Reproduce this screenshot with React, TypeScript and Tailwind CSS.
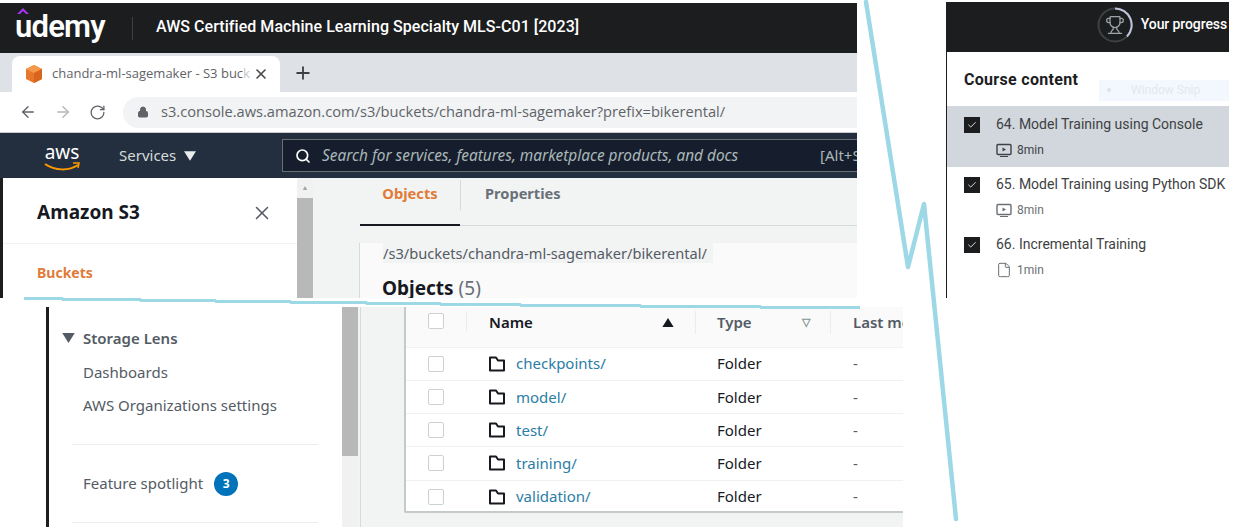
import React from "react";
import { ArrowLeft, ArrowRight, RotateCw, Lock, Plus, X, Search, Trophy, Check, File } from "lucide-react";

const Tick = () => (
  <div className="flex h-4 w-4 shrink-0 items-center justify-center bg-[#1c1d1f]">
    <Check className="h-2.5 w-2.5 text-white" strokeWidth={2} />
  </div>
);

const Tri = ({ className, up }: { className: string; up?: boolean }) => (
  <svg viewBox="0 0 10 8" className={className}>
    <path d={up ? "M0 8h10L5 0z" : "M0 0h10L5 8z"} fill="currentColor" />
  </svg>
);

const PlayIcon = () => (
  <svg viewBox="0 0 16 16" className="h-4 w-4 shrink-0" fill="none">
    <rect x="1" y="2.5" width="14" height="10" rx="1" stroke="currentColor" strokeWidth="1.4" />
    <path d="M6.5 5.5v4l3.5-2z" fill="currentColor" />
    <path d="M4 14.5h8" stroke="currentColor" strokeWidth="1" />
  </svg>
);

const FolderIcon = () => (
  <svg viewBox="0 0 16 16" className="h-4 w-4 shrink-0" fill="none">
    <path d="M1 14.5V1.5h6l2 3h6v10z" stroke="#16191f" strokeWidth="2" strokeLinejoin="round" />
  </svg>
);

const Cube = () => (
  <svg viewBox="0 0 20 20" className="h-5 w-5 shrink-0">
    <path d="M10 1l8 4v10l-8 4-8-4V5z" fill="#e8772e" />
    <path d="M10 1l8 4-8 4-8-4z" fill="#f59a4c" />
    <path d="M10 9l8-4v10l-8 4z" fill="#d9651c" />
  </svg>
);

const Course = ({ title, time, doc, active }: { title: string; time: string; doc?: boolean; active?: boolean }) => (
  <div className={`flex h-[60px] pl-[17px] pt-[10px] ${active ? "bg-[#d1d7dc]" : "bg-white"}`}>
    <Tick />
    <div className="ml-4 min-w-0">
      <div className="-mt-px whitespace-nowrap text-[14px] leading-[16px] text-[#3e4143]">{title}</div>
      <div className={`mt-[10px] flex items-center gap-[5px] text-[12px] leading-4 ${active ? "text-[#3e4143]" : "text-[#6a6f73]"}`}>
        {doc ? <File className="h-4 w-4" strokeWidth={1.5} /> : <PlayIcon />}
        <span>{time}</span>
      </div>
    </div>
  </div>
);

const rows = ["checkpoints/", "model/", "test/", "training/", "validation/"];

const Box = () => <div className="h-4 w-4 rounded-[2px] border border-[#ccd1d3] bg-white" />;

export default function App() {
  return (
    <div className="relative h-[529px] w-[1236px] overflow-hidden bg-white font-['Noto_Sans',sans-serif]">
      <div className="flex items-start">
        {/* left capture */}
        <div className="mt-[3px] flex h-[295px] w-[857px] flex-col overflow-hidden">
          <div className="flex h-[50px] shrink-0 items-center bg-[#1c1d1f] pl-[15px] font-['Roboto',sans-serif] text-white">
            <div className="relative w-[93px] pb-[3px]">
              <svg viewBox="0 0 14 7" className="absolute left-[1px] top-[0px] h-[6px] w-[14px]">
                <path d="M0 7l7-7 7 7h-3.5L7 3.5 3.5 7z" fill="#a435f0" />
              </svg>
              <span className="block text-[31px] font-semibold leading-[38px] tracking-[-0.8px]">udemy</span>
            </div>
            <div className="ml-[24px] h-[23px] w-px bg-[#3e4143]" />
            <div className="ml-[23px] pb-[2px] whitespace-nowrap text-[16px] font-medium tracking-[0.05px]">AWS Certified Machine Learning Specialty MLS-C01 [2023]</div>
          </div>

          <div className="flex h-[39px] shrink-0 items-end bg-[#dee1e6] pl-[12px]">
            <div className="flex h-[36px] w-[268px] items-center rounded-t-lg bg-white pl-[12px] font-['Open_Sans',sans-serif]">
              <Cube />
              <span className="ml-2 w-[193px] whitespace-nowrap text-[13px] text-[#5f6368]">chandra-ml-sagemaker - S3 buc<span className="text-[#c4c7ca]">k</span></span>
              <X className="ml-[8px] h-4 w-4 text-[#444746]" strokeWidth={2.4} />
            </div>
            <Plus className="mb-[9px] ml-[13px] h-[20px] w-[20px] text-[#3c4043]" strokeWidth={2.2} />
          </div>

          <div className="flex h-[41px] shrink-0 items-center border-b border-[#c6cbd0] bg-white pl-[19px]">
            <ArrowLeft className="h-[18px] w-[18px] text-[#5f6368]" strokeWidth={1.8} />
            <ArrowRight className="ml-[17px] h-[18px] w-[18px] text-[#b4b7bb]" strokeWidth={1.8} />
            <RotateCw className="ml-[17px] h-[17px] w-[17px] text-[#5f6368]" strokeWidth={1.8} />
            <div className="ml-[17px] flex h-[31px] flex-1 items-center rounded-l-full bg-[#f1f3f4] pl-[14px] font-['Open_Sans',sans-serif] text-[14.65px] text-[#5f6368]">
              <Lock className="h-3 w-3 fill-[#5f6368] text-[#5f6368]" />
              <span className="ml-[12px] whitespace-nowrap">s3.console.aws.amazon.com/s3/buckets/chandra-ml-sagemaker?prefix=bikerental/</span>
            </div>
          </div>

          <div className="flex h-[45px] shrink-0 items-center bg-[#232f3e] pl-[44px] text-[#d5dbdb]">
            <div className="relative w-[36px] shrink-0 text-center text-[19px] leading-[18px] text-white">
              <span className="relative top-[-4px]">aws</span>
              <svg viewBox="0 0 36 10" className="absolute left-0 top-[15px] h-[10px] w-[36px]" fill="none">
                <path d="M1 2c10 7 24 7 33 1" stroke="#f90" strokeWidth="2" />
                <path d="M29 1h6l-1 5" stroke="#f90" strokeWidth="1.5" />
              </svg>
            </div>
            <span className="ml-[39px] w-[58px] shrink-0 text-[15px]">Services</span>
            <Tri className="ml-[7px] h-[10px] w-[12px] shrink-0 text-[#e8ecec]" />
            <div className="ml-[86px] flex h-[33px] min-w-0 flex-1 items-center border border-r-0 border-[#687078] bg-[#161e2d] pl-[12px] text-[15.4px]">
              <Search className="h-4 w-4 shrink-0 text-white" strokeWidth={2.5} />
              <span className="ml-[11px] w-[498px] shrink-0 whitespace-nowrap italic text-[#aab7b8]">Search for services, features, marketplace products, and docs</span>
              <span className="shrink-0 whitespace-nowrap text-[15px] text-[#aab7b8]">[Alt+S]</span>
            </div>
          </div>

          <div className="flex min-h-0 flex-1 border-l-[3px] border-[#1c1d1f]">
            <div className="w-[294px] shrink-0 bg-white">
              <div className="flex h-[66px] items-center justify-between border-b border-[#f2f3f3] pl-[34px] pr-[24px] pt-[4px]">
                <span className="text-[19px] font-bold text-[#16191f]">Amazon S3</span>
                <X className="h-[22px] w-[22px] text-[#545b64]" strokeWidth={1.7} />
              </div>
              <div className="pl-[34px] pt-[18px] text-[14px] font-bold text-[#e07b39]">Buckets</div>
            </div>
            <div className="flex w-[16px] shrink-0 flex-col bg-[#f1f1f1]">
              <div className="flex h-[20px] items-center justify-center text-[7px] text-[#a3a3a3]">▲</div>
              <div className="flex-1 bg-[#b8b8b8]" />
            </div>
            <div className="min-w-0 flex-1 bg-[#f2f3f3] pl-[47px]">
              <div className="flex h-[48px] border-b border-[#d5dbdb]">
                <div className="flex h-[48px] w-[100px] shrink-0 justify-center border-b-2 border-[#16191f] pt-[4px] text-[14.7px] font-bold text-[#e07b39]">Objects</div>
                <div className="my-[2px] h-[30px] w-px bg-[#d5dbdb]" />
                <div className="pl-[24px] pt-[5px] text-[14.6px] font-bold text-[#687078]">Properties</div>
              </div>
              <div className="-ml-px mt-[23px] border-l border-[#d5dbdb] bg-[#fafafa] pl-[23px]">
                <div className="-mt-[6px] w-fit bg-[#f2f3f3] pr-[6px] text-[14.6px] leading-[20px] text-[#545b64]">/s3/buckets/chandra-ml-sagemaker/bikerental/</div>
                <div className="-ml-px mt-[11px] whitespace-nowrap text-[19px] font-bold text-[#16191f]">
                  Objects <span className="font-normal text-[#687078]">(5)</span>
                </div>
              </div>
            </div>
          </div>
        </div>

        {/* right capture */}
        <div className="ml-[89px] mt-[2px] flex h-[296px] w-[283px] flex-col overflow-hidden border-l border-[#1c1d1f] font-['Roboto',sans-serif]">
          <div className="flex h-[50px] shrink-0 items-center justify-end bg-[#1c1d1f] pb-[4px] pr-[2px] text-[14px] font-medium whitespace-nowrap text-white">
            <div className="relative mr-[8px] flex h-[36px] w-[36px] items-center justify-center">
              <svg viewBox="0 0 36 36" className="absolute inset-0" fill="none">
                <circle cx="18" cy="18" r="16.5" stroke="#3e4143" strokeWidth="2" />
                <path d="M18 1.5A16.5 16.5 0 0 1 30 29.5" stroke="#c0c4dc" strokeWidth="2" />
              </svg>
              <Trophy className="h-5 w-5 text-[#9da3a7]" strokeWidth={1.5} />
            </div>
            <span className="-mt-px tracking-[-0.1px]">Your progress</span>
          </div>
          <div className="flex h-[55px] shrink-0 items-center justify-between border-b border-[#d1d7dc] bg-white pl-[17px]">
            <span className="pt-[2px] text-[16px] font-bold tracking-[0.3px] text-[#1c1d1f]">Course content</span>
            <div className="mt-[22px] flex h-[21px] w-[130px] items-center bg-[#f3f8fe] pl-[8px] text-[12px] text-[#e2e8f0]">
              <span className="mr-[20px] h-[4px] w-[4px] rounded-full bg-[#dde3ee]" />
              Window Snip
            </div>
          </div>
          <Course title="64. Model Training using Console" time="8min" active />
          <Course title="65. Model Training using Python SDK" time="8min" />
          <Course title="66. Incremental Training" time="1min" doc />
        </div>
      </div>

      {/* lower capture */}
      <div className="ml-[46px] mt-[9px] flex h-[220px] w-[857px] overflow-hidden border-l-[3px] border-[#1c1d1f]">
        <div className="w-[293px] shrink-0 bg-white pl-[13px] text-[15px] text-[#545b64]">
          <div className="flex items-center pt-[20px] font-semibold">
            <Tri className="mr-[8px] h-[10px] w-[13px]" />
            Storage Lens
          </div>
          <div className="ml-[21px] mt-[12px] leading-[20px]">Dashboards</div>
          <div className="ml-[21px] mt-[13px] leading-[20px]">AWS Organizations settings</div>
          <div className="ml-[10px] mt-[29px] h-px w-[246px] bg-[#eaeded]" />
          <div className="ml-[21px] mt-[27px] flex items-center">
            <span>Feature spotlight</span>
            <span className="ml-[11px] flex h-[24px] w-[24px] items-center justify-center rounded-full bg-[#0073bb] text-[12px] font-bold text-white">3</span>
          </div>
          <div className="ml-[10px] mt-[26px] h-px w-[246px] bg-[#eaeded]" />
        </div>
        <div className="w-[16px] shrink-0 bg-[#f1f1f1]">
          <div className="h-[149px] bg-[#b8b8b8]" />
        </div>
        <div className="min-w-0 flex-1 bg-[#f2f3f3] pl-[2px]">
          <div className="h-full border-l border-[#d5dbdb] pl-[43px]">
            <div className="h-[206px] overflow-hidden rounded-bl-[2px] border-b-2 border-l-2 border-[#c4c9cc] bg-white text-[15px]">
              <div className="grid h-[39.5px] grid-cols-[61px_229px_135px_1fr] items-start bg-[#fafafa] pt-[4px] font-semibold text-[#545b64]">
                <div className="flex justify-center border-r border-[#eaeded] pr-[1px] pt-[2px] pb-[2px]"><Box /></div>
                <div className="flex items-center justify-between border-r border-[#eaeded] pl-[22px] pr-[21px] text-[#16191f]">
                  <span>Name</span><Tri up className="h-[9px] w-[12px]" />
                </div>
                <div className="flex items-center justify-between border-r border-[#eaeded] pl-[21px] pr-[20px]">
                  <span>Type</span><span className="text-[11px] text-[#879596]">▽</span>
                </div>
                <div className="whitespace-nowrap pl-[22px]">Last modified</div>
              </div>
              {rows.map((r) => (
                <div key={r} className="grid h-[33.25px] grid-cols-[61px_229px_135px_1fr] items-center border-t border-[#f0f2f2]">
                  <div className="flex justify-center pr-[1px]"><Box /></div>
                  <div className="flex items-center gap-[11px] pl-[22px] text-[#2b7da5]">
                    <FolderIcon />
                    <span>{r}</span>
                  </div>
                  <div className="pl-[21px] text-[#16191f]">Folder</div>
                  <div className="pl-[22px] text-[#545b64]">-</div>
                </div>
              ))}
            </div>
          </div>
        </div>
      </div>

      {/* hand drawn annotation lines */}
      <svg className="pointer-events-none absolute inset-0 h-[529px] w-[1236px]" viewBox="0 0 1236 529" fill="none">
        <path d="M866 2L908 267L924 204L956 519" stroke="#9dd8e6" strokeWidth="4.5" strokeLinecap="round" strokeLinejoin="round" />
        <path d="M24 298.5H62L63 299.5H140L141 300.5H215L216 301.5H290L291 302.5H366L367 303.5H440L441 304.5H520L521 305.5H640L641 306.5H760L761 307.5H860" stroke="#9dd8e6" strokeWidth="3" />
      </svg>
    </div>
  );
}
